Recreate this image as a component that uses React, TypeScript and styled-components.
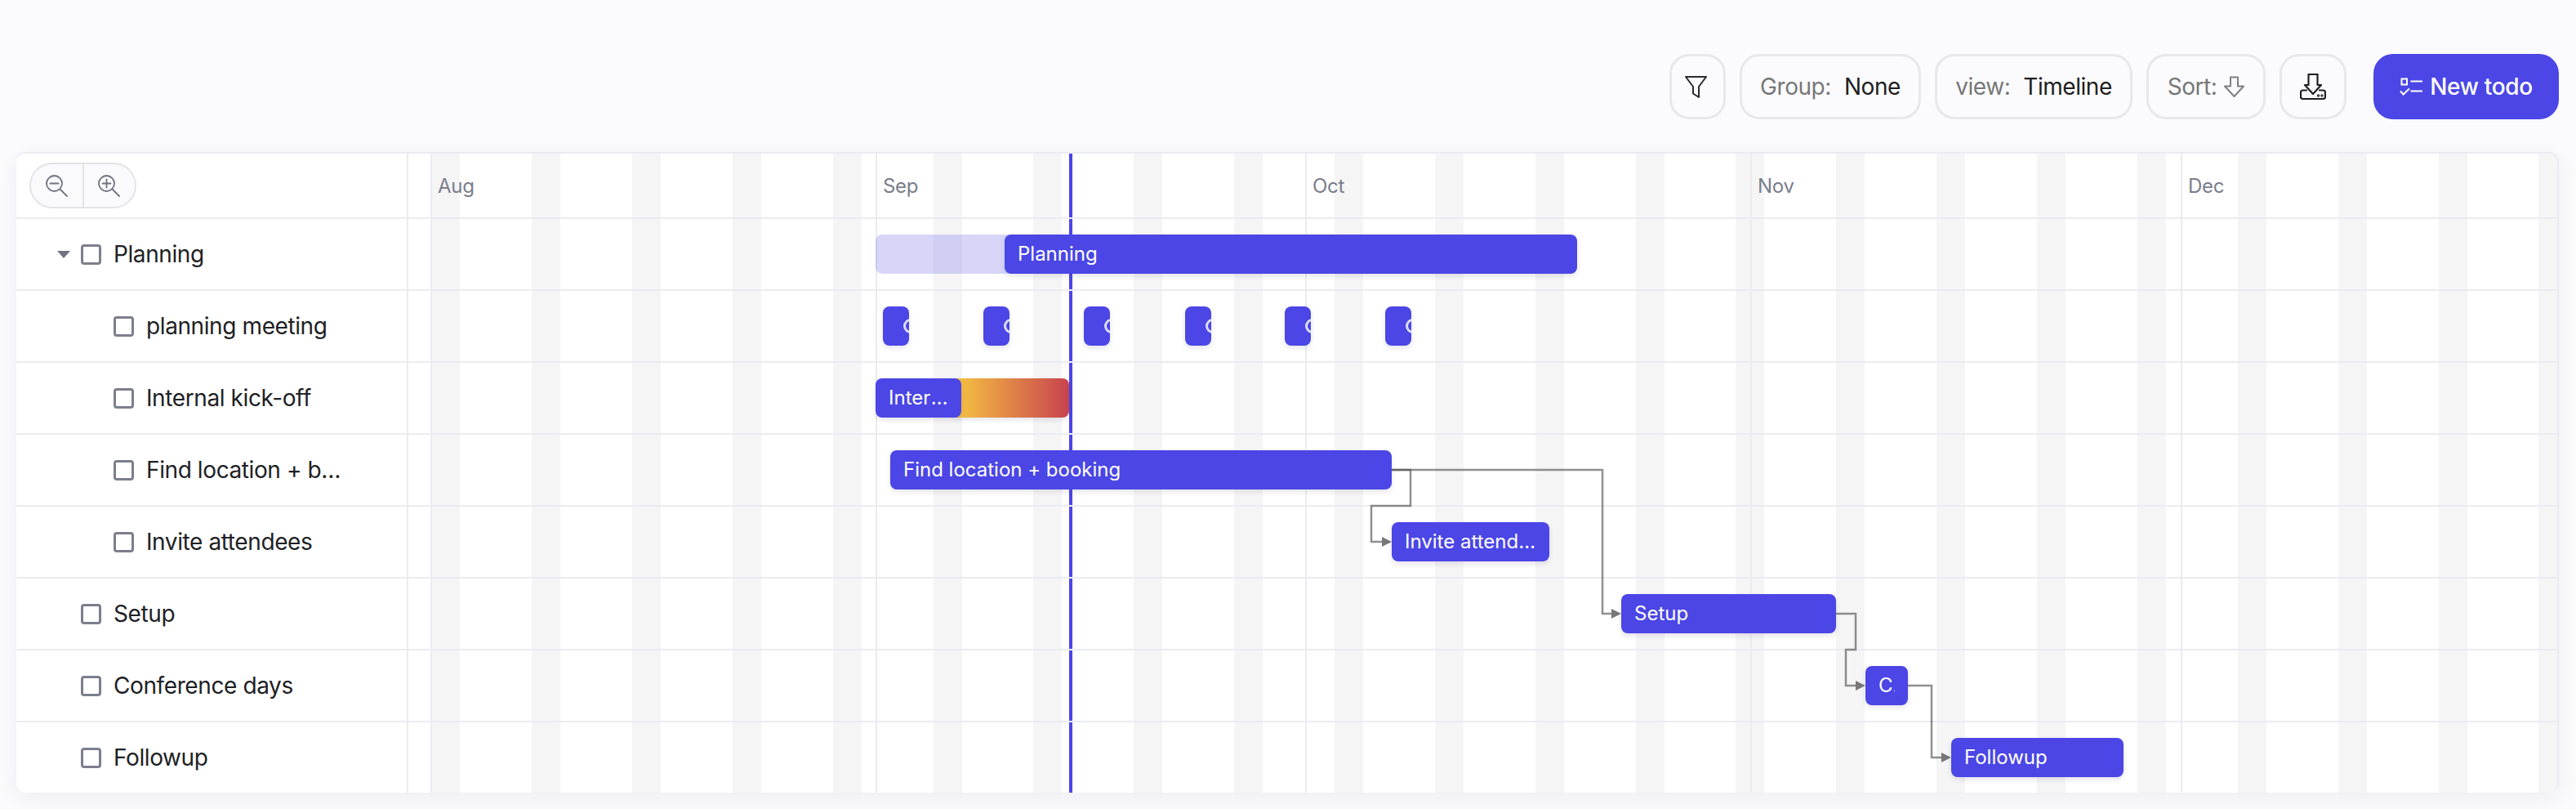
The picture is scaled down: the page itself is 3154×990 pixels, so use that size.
import React from "react";
import styled, { createGlobalStyle } from "styled-components";

const INDIGO = "#4b46e5";
const LINE = "#ebebf1";

const Global = createGlobalStyle`
  html, body { margin: 0; padding: 0; background: #fbfbfe; }
  body { font-family: Inter, "Liberation Sans", sans-serif; -webkit-font-smoothing: antialiased; }
  * { box-sizing: border-box; }
`;

const Page = styled.div`
  width: 3154px;
  height: 990px;
  overflow: hidden;
`;

const Toolbar = styled.div`
  height: 186px;
  padding: 66px 21px 0 0;
  display: flex;
  justify-content: flex-end;
  align-items: flex-start;
  gap: 17px;
`;

const ToolButton = styled.button<{ $w: number }>`
  height: 80px;
  width: ${(p) => p.$w}px;
  padding: 0;
  border: 3px solid #e8e8ea;
  border-radius: 24px;
  background: #fbfbfe;
  display: flex;
  align-items: center;
  justify-content: center;
  font: 400 28px Inter, sans-serif;
  letter-spacing: -0.45px;
  color: #202020;
  white-space: nowrap;
`;

const Muted = styled.span`
  color: #777777;
`;

const LabelGap = styled.span`
  display: inline-block;
  width: 16px;
`;

const PrimaryButton = styled.button`
  height: 80px;
  width: 227px;
  margin-left: 16px;
  border: none;
  border-radius: 24px;
  background: ${INDIGO};
  color: #fff;
  font: 500 28px Inter, sans-serif;
  letter-spacing: -0.35px;
  display: flex;
  align-items: center;
  justify-content: center;
  gap: 9px;
`;

const Panel = styled.section`
  position: relative;
  margin-left: 20px;
  width: 3113px;
  height: 784px;
  background: #fff;
  border-top: 2px solid ${LINE};
  border-right: 2px solid ${LINE};
  border-radius: 12px;
  box-shadow: 0 6px 24px rgba(30, 30, 90, 0.07);
  overflow: hidden;
`;

const Backdrop = styled.div`
  position: absolute;
  inset: 0;
`;

const Weekend = styled.div<{ $x: number }>`
  position: absolute;
  top: 0;
  bottom: 0;
  left: ${(p) => p.$x}px;
  width: 35px;
  background: #f5f5f6;
`;

const MonthLine = styled.div<{ $x: number }>`
  position: absolute;
  top: 0;
  bottom: 0;
  left: ${(p) => p.$x}px;
  width: 2px;
  background: ${LINE};
`;

const MonthLabel = styled.span`
  position: absolute;
  top: 26px;
  left: 9px;
  font-size: 24px;
  line-height: 28px;
  letter-spacing: -0.3px;
  color: #7a7d8b;
`;

const TodayLine = styled.div<{ $x: number }>`
  position: absolute;
  top: 0;
  bottom: 0;
  left: ${(p) => p.$x}px;
  width: 4px;
  background: ${INDIGO};
`;

const Rows = styled.div`
  position: relative;
  display: flex;
  flex-direction: column;
`;

const HeaderRow = styled.div`
  height: 80px;
  display: flex;
  border-bottom: 2px solid ${LINE};
`;

const Row = styled.div<{ $last?: boolean }>`
  height: ${(p) => (p.$last ? 86 : 88)}px;
  display: flex;
  ${(p) => (p.$last ? "" : `border-bottom: 2px solid ${LINE};`)}
`;

const NameCell = styled.div<{ $level?: number }>`
  flex: 0 0 480px;
  height: 100%;
  background: #fff;
  border-right: 2px solid ${LINE};
  padding-left: ${(p) => 50 + (p.$level ?? 0) * 40}px;
  display: flex;
  align-items: center;
  font-size: 28px;
  letter-spacing: -0.4px;
  color: #202124;
`;

const ToolCell = styled(NameCell)`
  padding-left: 16px;
`;

const ZoomGroup = styled.div`
  width: 131px;
  height: 56px;
  border: 2px solid #e4e4e7;
  border-radius: 28px;
  background: #fafafc;
  display: flex;
  overflow: hidden;
`;

const ZoomButton = styled.button<{ $divider?: boolean }>`
  flex: 1;
  border: none;
  background: transparent;
  padding: 0;
  display: flex;
  align-items: center;
  justify-content: center;
  ${(p) => (p.$divider ? "border-right: 2px solid #e4e4e7;" : "")}
`;

const CaretSlot = styled.span`
  flex: 0 0 29px;
  display: flex;
  align-items: center;
`;

const Caret = styled.span`
  width: 0;
  height: 0;
  border-left: 8.5px solid transparent;
  border-right: 8.5px solid transparent;
  border-top: 9px solid #6f7280;
`;

const Check = styled.span`
  flex: 0 0 25px;
  height: 25px;
  border: 3px solid #7b7f8d;
  border-radius: 4px;
  margin-right: 15px;
`;

const NameText = styled.span`
  max-width: 246px;
  overflow: hidden;
  white-space: nowrap;
  text-overflow: ellipsis;
`;

const Track = styled.div`
  position: relative;
  flex: 1;
  height: 100%;
`;

const Bar = styled.div<{ $x: number; $w: number }>`
  position: absolute;
  top: 19px;
  left: ${(p) => p.$x}px;
  width: ${(p) => p.$w}px;
  height: 48px;
  padding: 0 16px;
  border-radius: 8px;
  background: ${INDIGO};
  color: #fff;
  font-size: 24px;
  line-height: 48px;
  letter-spacing: 0;
  overflow: hidden;
  box-shadow: 0 3px 6px rgba(30, 30, 90, 0.12);
`;

const BarLabel = styled.span`
  display: block;
  overflow: hidden;
  white-space: nowrap;
  text-overflow: ellipsis;
`;

const GhostBar = styled(Bar)`
  background: rgba(75, 70, 229, 0.22);
  box-shadow: none;
`;

const OverrunBar = styled(Bar)`
  background: linear-gradient(90deg, #f6c342, #c8424e);
  border-radius: 0 8px 8px 0;
`;

const Ring = styled.span`
  position: absolute;
  left: 25px;
  top: 15px;
  width: 18px;
  height: 18px;
  border: 3px solid #dcdcf8;
  border-radius: 50%;
`;

const Arrows = styled.svg`
  position: absolute;
  left: 0;
  top: 0;
  pointer-events: none;
`;

const months = [
  { label: "Aug", x: 527 },
  { label: "Sep", x: 1072 },
  { label: "Oct", x: 1598 },
  { label: "Nov", x: 2143 },
  { label: "Dec", x: 2670 },
];

const PX = 20; // page x of the panel's left edge
const TX = 500; // page x where the track starts
const PY = 188; // page y of the panel's inner top
const track = (x: number) => x - TX;

const connectors = [
  "M1704 575H1727V619H1679V663H1696",
  "M1704 575H1962V751H1977",
  "M2248 751H2272V795H2260V839H2276",
  "M2336 839H2365V927H2381",
];
const heads = [
  [1704, 663],
  [1985, 751],
  [2284, 839],
  [2389, 927],
];

const FilterIcon = () => (
  <svg width="28" height="28" viewBox="0 0 28 28" fill="none" stroke="#2a2a2a" strokeWidth="2" strokeLinejoin="round" style={{ marginRight: 6 }}>
    <path d="M2 2H27L18 14V27L11 22.500V14Z" />
  </svg>
);
const SortIcon = () => (
  <svg width="25" height="26" viewBox="0 0 25 26" fill="none" stroke="#808080" strokeWidth="2" strokeLinejoin="round" style={{ marginLeft: 9 }}>
    <path d="M8 1.500H17V12.500H24L12.500 25L1 12.500H8Z" />
  </svg>
);
const DownloadIcon = () => (
  <svg width="32" height="32" viewBox="0 0 32 32" fill="none" stroke="#1e1e1e" strokeWidth="2.200" strokeLinejoin="round" strokeLinecap="round">
    <path d="M10.500 1H21.500V14H26L16 25L6 14H10.500Z" />
    <path d="M8 20.500H3.500A2.500 2.500 0 0 0 1 23V28.500A2.500 2.500 0 0 0 3.500 31H28.500A2.500 2.500 0 0 0 31 28.500V23A2.500 2.500 0 0 0 28.500 20.500H24" />
    <circle cx="22.500" cy="27" r="0.600" />
    <circle cx="27" cy="27" r="0.600" />
  </svg>
);
const TodoIcon = () => (
  <svg width="28" height="22" viewBox="0 0 28 22" fill="none" stroke="#fff" strokeWidth="2">
    <rect x="2.500" y="1.500" width="6.500" height="7" />
    <path d="M13.500 4.500H28M13.500 16.500H28" />
    <path d="M1 16.500L4.500 20.500L12 13.500" />
  </svg>
);
const Magnifier = ({ plus }: { plus?: boolean }) => (
  <svg width="27" height="27" viewBox="0 0 27 27" fill="none" stroke="#6f7280" strokeWidth="1.800" strokeLinecap="round">
    <circle cx="10.500" cy="10.500" r="9.500" />
    <path d="M18 18L26 26" />
    <path d="M5.500 10.500H15.500" />
    {plus && <path d="M10.500 5.500V15.500" />}
  </svg>
);

type Item = { name: string; level: number; caret?: boolean };
const items: Item[] = [
  { name: "Planning", level: 0, caret: true },
  { name: "planning meeting", level: 1 },
  { name: "Internal kick-off", level: 1 },
  { name: "Find location + booking", level: 1 },
  { name: "Invite attendees", level: 1 },
  { name: "Setup", level: 0 },
  { name: "Conference days", level: 0 },
  { name: "Followup", level: 0 },
];

const meetings = [1081, 1204, 1327, 1451, 1573, 1696];

const trackContent: React.ReactNode[] = [
  <>
    <GhostBar $x={track(1072)} $w={170} />
    <Bar $x={track(1230)} $w={701}><BarLabel>Planning</BarLabel></Bar>
  </>,
  <>
    {meetings.map((x) => (
      <Bar key={x} $x={track(x)} $w={32}>
        <Ring />
      </Bar>
    ))}
  </>,
  <>
    <OverrunBar $x={track(1170)} $w={139} />
    <Bar $x={track(1072)} $w={105}><BarLabel>Internal kick-off</BarLabel></Bar>
  </>,
  <Bar $x={track(1090)} $w={614}><BarLabel>Find location + booking</BarLabel></Bar>,
  <Bar $x={track(1704)} $w={193}><BarLabel>Invite attendees</BarLabel></Bar>,
  <Bar $x={track(1985)} $w={263}><BarLabel>Setup</BarLabel></Bar>,
  <Bar $x={track(2284)} $w={52}><BarLabel>Conference days</BarLabel></Bar>,
  <Bar $x={track(2389)} $w={211}><BarLabel>Followup</BarLabel></Bar>,
];

export default function App() {
  return (
    <Page>
      <Global />
      <Toolbar>
        <ToolButton $w={69}><FilterIcon /></ToolButton>
        <ToolButton $w={222}><Muted>Group:</Muted><LabelGap />None</ToolButton>
        <ToolButton $w={242}><Muted>view:</Muted><LabelGap />Timeline</ToolButton>
        <ToolButton $w={146}><Muted>Sort:</Muted><SortIcon /></ToolButton>
        <ToolButton $w={82}><DownloadIcon /></ToolButton>
        <PrimaryButton><TodoIcon />New todo</PrimaryButton>
      </Toolbar>
      <Panel>
        <Backdrop>
          {Array.from({ length: 22 }, (_, k) => (
            <Weekend key={k} $x={528.3 + 122.86 * k - PX} />
          ))}
          {months.map((m) => (
            <MonthLine key={m.label} $x={m.x - PX}>
              <MonthLabel>{m.label}</MonthLabel>
            </MonthLine>
          ))}
          <TodayLine $x={1309 - PX} />
        </Backdrop>
        <Rows>
          <HeaderRow>
            <ToolCell>
              <ZoomGroup>
                <ZoomButton $divider><Magnifier /></ZoomButton>
                <ZoomButton><Magnifier plus /></ZoomButton>
              </ZoomGroup>
            </ToolCell>
          </HeaderRow>
          {items.map((it, i) => (
            <Row key={it.name} $last={i === items.length - 1}>
              <NameCell $level={it.level}>
                <CaretSlot>{it.caret && <Caret />}</CaretSlot>
                <Check />
                <NameText>{it.name}</NameText>
              </NameCell>
              <Track>{trackContent[i]}</Track>
            </Row>
          ))}
        </Rows>
        <Arrows width="3111" height="782" viewBox={`${PX} ${PY} 3111 782`} fill="none">
          {connectors.map((d) => (
            <path key={d} d={d} stroke="rgba(70,70,70,0.6)" strokeWidth="2.500" />
          ))}
          {heads.map(([x, y]) => (
            <path key={x} d={`M${x} ${y}L${x - 12} ${y - 6}V${y + 6}Z`} fill="#777" />
          ))}
        </Arrows>
      </Panel>
    </Page>
  );
}
